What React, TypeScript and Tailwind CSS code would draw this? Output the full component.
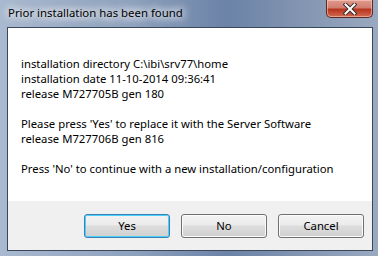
import { useState } from 'react';

const lines = [
  'installation directory C:\\ibi\\srv77\\home',
  'installation date 11-10-2014 09:36:41',
  'release M727705B gen 180',
  '',
  "Please press 'Yes' to replace it with the Server Software",
  'release M727706B gen 816',
  '',
  "Press 'No' to continue with a new installation/configuration",
];

const CloseGlyph = () => (
  <svg width="14" height="12" viewBox="0 0 14 12">
    <path d="M2.5 1.5 L11.5 10.5 M11.5 1.5 L2.5 10.5" stroke="#3a2a2a" strokeWidth="4" strokeLinecap="square" />
    <path d="M2.5 1.5 L11.5 10.5 M11.5 1.5 L2.5 10.5" stroke="#ffffff" strokeWidth="2" strokeLinecap="square" />
  </svg>
);

const DialogButton = ({ label, isDefault }: { label: string; isDefault?: boolean }) => (
  <button
    className={
      'w-[86px] h-[24px] rounded-[3px] border flex items-center justify-center text-[11.3px] text-black bg-[linear-gradient(#f3f3f3_0%,#ebebeb_45%,#dddddd_50%,#cfcfcf_100%)] ' +
      (isDefault
        ? 'border-[#3c7fb1] shadow-[inset_0_0_0_1px_#48d0ff]'
        : 'border-[#707070] shadow-[inset_0_0_0_1px_#fbfbfb]')
    }
  >
    {label}
  </button>
);

export default function App() {
  const [choice, setChoice] = useState('');

  return (
    <div className="w-[378px] h-[256px] flex flex-col pl-[7px] pr-[5px] pb-[5px] bg-[linear-gradient(90deg,#a9b9cf_0%,#8ea1bd_35%,#6b83a7_60%,#8395b1_80%,#9aa9c0_100%)] font-['Noto_Sans',sans-serif] overflow-hidden">
      {/* Title bar */}
      <div className="h-[27px] flex justify-between items-start shrink-0">
        <span className="mt-[5px] ml-[1px] text-[11.4px] text-black leading-[16px] [text-shadow:0_0_8px_#ffffff,0_0_8px_#ffffff,0_0_12px_#ffffff]">
          Prior installation has been found
        </span>
        <div className="w-[47px] h-[18px] rounded-b-[5px] border border-t-0 border-[#5b2b24] bg-[linear-gradient(#e39a8c_0%,#d07e6f_45%,#b8351f_55%,#d16a52_100%)] shadow-[inset_0_0_0_1px_rgba(255,220,210,0.5)] flex items-center justify-center">
          <CloseGlyph />
        </div>
      </div>

      {/* Client area */}
      <div className="flex-1 flex flex-col border border-[#3a4659] bg-white">
        <div className="flex-1 pt-[28px] pl-[13px] text-[11.3px] leading-[15px] text-black">
          {lines.map((l, i) => (
            <div key={i} className="h-[15px] whitespace-pre">{l}</div>
          ))}
        </div>
        <div className="h-[49px] bg-[#f0f0f0] flex justify-end items-start pt-[13px] pr-[8px] gap-[11px]">
          {['Yes', 'No', 'Cancel'].map((b) => (
            <div key={b} onClick={() => setChoice(b)}>
              <DialogButton label={b} isDefault={b === 'Yes' && choice === ''} />
            </div>
          ))}
        </div>
      </div>
    </div>
  );
}
